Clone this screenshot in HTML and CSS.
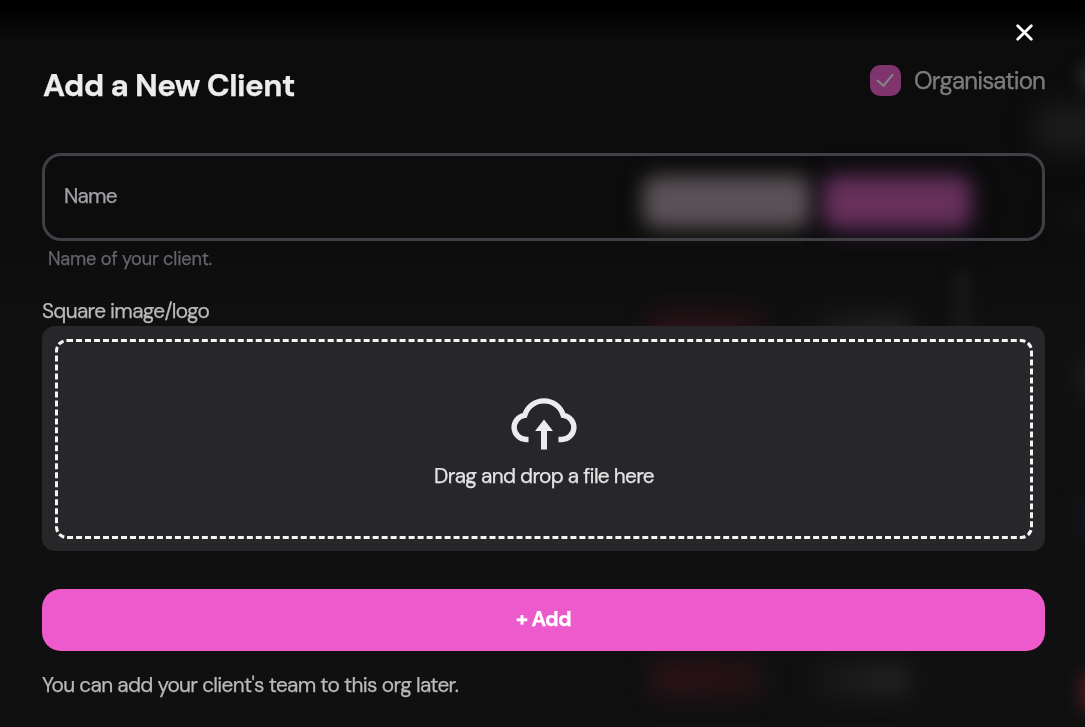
FILE: index.html
```html
<!DOCTYPE html>
<html lang="en">
<head>
    <meta charset="UTF-8">
    <title>Add a New Client</title>
    <link rel="stylesheet" href="styles.css">
</head>
<body>
    <!-- blurred page behind the modal -->
    <div class="backdrop" aria-hidden="true">
        <div class="blob blob-light"></div>
        <div class="blob blob-pink"></div>
        <div class="blob blob-red"></div>
        <div class="blob blob-grey"></div>
        <div class="blob blob-red low"></div>
        <div class="blob blob-grey low"></div>
        <div class="blob blob-line"></div>
        <div class="blob blob-panel"></div>
        <div class="blob blob-dot"></div>
        <div class="blob blob-side"></div>
        <div class="blob blob-mid"></div>
        <div class="blob blob-blue"></div>
        <div class="blob blob-edge"></div>
    </div>

    <div class="modal">
        <div class="close-row">
            <button type="button" class="close-btn" aria-label="Close">
                <svg width="17" height="17" viewBox="0 0 17 17"><path d="M1.7 1.7L15.3 15.3M15.3 1.7L1.7 15.3"/></svg>
            </button>
        </div>
        <div class="modal-header">
            <h2>Add a New Client</h2>
            <div class="org-check">
                <span class="checkbox">
                    <svg width="31" height="31" viewBox="0 0 31 31"><path d="M7.5 15.5L13.5 20.7L22.5 9.8"/></svg>
                </span>
                <span class="org-label">Organisation</span>
            </div>
        </div>

        <form class="client-form">
            <input type="text" class="name-input" name="name" placeholder="Name">
            <p class="hint">Name of your client.</p>

            <p class="upload-label">Square image/logo</p>
            <div class="upload">
                <div class="drop-area">
                    <svg class="cloud" width="68" height="54" viewBox="0 0 68 54">
                        <path class="cloud-line" d="M18.5 41.5H16.5A12.1 12.1 0 0 1 14.7 17.4A20.1 20.1 0 0 1 53.3 17.4A12.1 12.1 0 0 1 51.5 41.5H48.5"/>
                        <path class="cloud-arrow" d="M34 21.5L43 33H37V51.5H31V33H25Z"/>
                    </svg>
                    <p class="drop-text">Drag and drop a file here</p>
                </div>
            </div>

            <button type="button" class="add-btn">+ Add</button>
            <p class="note">You can add your client's team to this org later.</p>
        </form>
    </div>
</body>
</html>
```

FILE: styles.css
```css
* {
    margin: 0;
    padding: 0;
    box-sizing: border-box;
}
body {
    font-family: "DM Sans", Inter, sans-serif;
    font-size: 20.8px;
    -webkit-text-stroke: 0.25px;
    background: linear-gradient(#000 0, #000 8px, #0c0c0c 42px, #0c0c0c 230px, #101010 330px, #101010 100%);
    width: 100%;
    height: 100vh;
    overflow: hidden;
}
.backdrop {
    position: fixed;
    inset: 0;
    overflow: hidden;
}
.blob {
    position: absolute;
    filter: blur(12px);
    border-radius: 14px;
}
.blob-light {
    left: 643px;
    top: 176px;
    width: 168px;
    height: 52px;
    background: #5a5257;
    filter: blur(10px);
}
.blob-pink {
    left: 823px;
    top: 176px;
    width: 148px;
    height: 52px;
    background: #66305a;
    box-shadow: 0 2px 14px #20123a;
    filter: blur(10px);
}
.blob-red {
    left: 650px;
    top: 313px;
    width: 112px;
    height: 34px;
    background: linear-gradient(90deg, #2e1219, #251216);
}
.blob-grey {
    left: 812px;
    top: 316px;
    width: 98px;
    height: 28px;
    background: linear-gradient(90deg, #161616, #282828);
}
.blob-red.low {
    top: 661px;
}
.blob-grey.low {
    top: 666px;
}
.blob-line {
    left: 953px;
    top: 270px;
    width: 18px;
    height: 70px;
    background: #171717;
    filter: blur(7px);
}
.blob-panel {
    left: 1035px;
    top: 104px;
    width: 70px;
    height: 48px;
    background: #1b1b1b;
}
.blob-dot {
    left: 1079px;
    top: 62px;
    width: 30px;
    height: 30px;
    background: #2a2a2a;
    filter: blur(8px);
}
.blob-side {
    left: 1055px;
    top: 208px;
    width: 50px;
    height: 18px;
    background: #141416;
}
.blob-mid {
    left: 1082px;
    top: 360px;
    width: 30px;
    height: 36px;
    background: #242424;
}
.blob-blue {
    left: 1078px;
    top: 500px;
    width: 30px;
    height: 36px;
    background: #111722;
}
.blob-edge {
    left: 1080px;
    top: 672px;
    width: 40px;
    height: 40px;
    background: #4a1824;
    filter: blur(8px);
}
.modal {
    position: relative;
    padding: 0 40px 0 42px;
}
.close-row {
    display: flex;
    justify-content: flex-end;
    padding: 24px 12px 0 0;
    height: 65px;
}
.close-btn {
    width: 17px;
    height: 17px;
    background: none;
    border: none;
    cursor: pointer;
}
.close-btn svg {
    display: block;
    fill: none;
    stroke: #fff;
    stroke-width: 2.8;
    stroke-linecap: round;
}
.modal-header {
    display: flex;
    justify-content: space-between;
    align-items: flex-start;
    height: 88px;
}
.modal-header h2 {
    padding-left: 1px;
    font-size: 31.2px;
    line-height: 41px;
    font-weight: 700;
    letter-spacing: -0.53px;
    color: #ececee;
    white-space: nowrap;
}
.org-check {
    display: flex;
    align-items: center;
    gap: 13px;
    height: 31px;
    opacity: 0.5;
}
.checkbox {
    width: 31px;
    height: 31px;
    border-radius: 10px;
    background: #f25cd0;
}
.checkbox svg {
    display: block;
    fill: none;
    stroke: #fff;
    stroke-width: 2;
    stroke-linecap: round;
}
.org-label {
    margin-top: -1px;
    font-size: 24px;
    letter-spacing: -0.85px;
    color: #ececee;
}
.name-input {
    display: block;
    width: 100%;
    height: 88px;
    padding: 0 19px 3px;
    font-family: inherit;
    font-size: 20.8px;
    letter-spacing: -0.8px;
    color: #ececee;
    background: transparent;
    border: 3px solid #3f3f46;
    border-radius: 19px;
    outline: none;
}
.name-input::placeholder {
    color: #a1a1aa;
    opacity: 1;
}
.hint {
    padding-left: 6px;
    height: 57px;
    font-size: 18.2px;
    line-height: 36px;
    letter-spacing: -0.2px;
    color: #65656d;
}
.upload-label {
    height: 28px;
    line-height: 26px;
    letter-spacing: -0.7px;
    color: #b9b9b9;
}
.upload {
    height: 225px;
    padding: 13px 12px 12px 13px;
    background: #27272a;
    border-radius: 13px;
}
.drop-area {
    display: flex;
    flex-direction: column;
    align-items: center;
    height: 200px;
    padding-top: 56px;
    border: 3px dashed #f4f4f5;
    border-radius: 12px;
}
.cloud {
    display: block;
    margin-right: 1px;
}
.cloud-line {
    fill: none;
    stroke: #ececee;
    stroke-width: 5.4;
}
.cloud-arrow {
    fill: #ececee;
}
.drop-text {
    margin-top: 11px;
    line-height: 26px;
    letter-spacing: -0.7px;
    color: #e4e4e6;
}
.add-btn {
    display: block;
    width: 100%;
    height: 62px;
    margin-top: 38px;
    padding-bottom: 3px;
    font-family: inherit;
    font-size: 20.8px;
    font-weight: 700;
    letter-spacing: -0.7px;
    color: #fff;
    background: #ec5acb;
    border: none;
    border-radius: 19px;
    cursor: pointer;
}
.note {
    margin-top: 21px;
    line-height: 26px;
    letter-spacing: -0.68px;
    color: #b9b9b9;
}
```
